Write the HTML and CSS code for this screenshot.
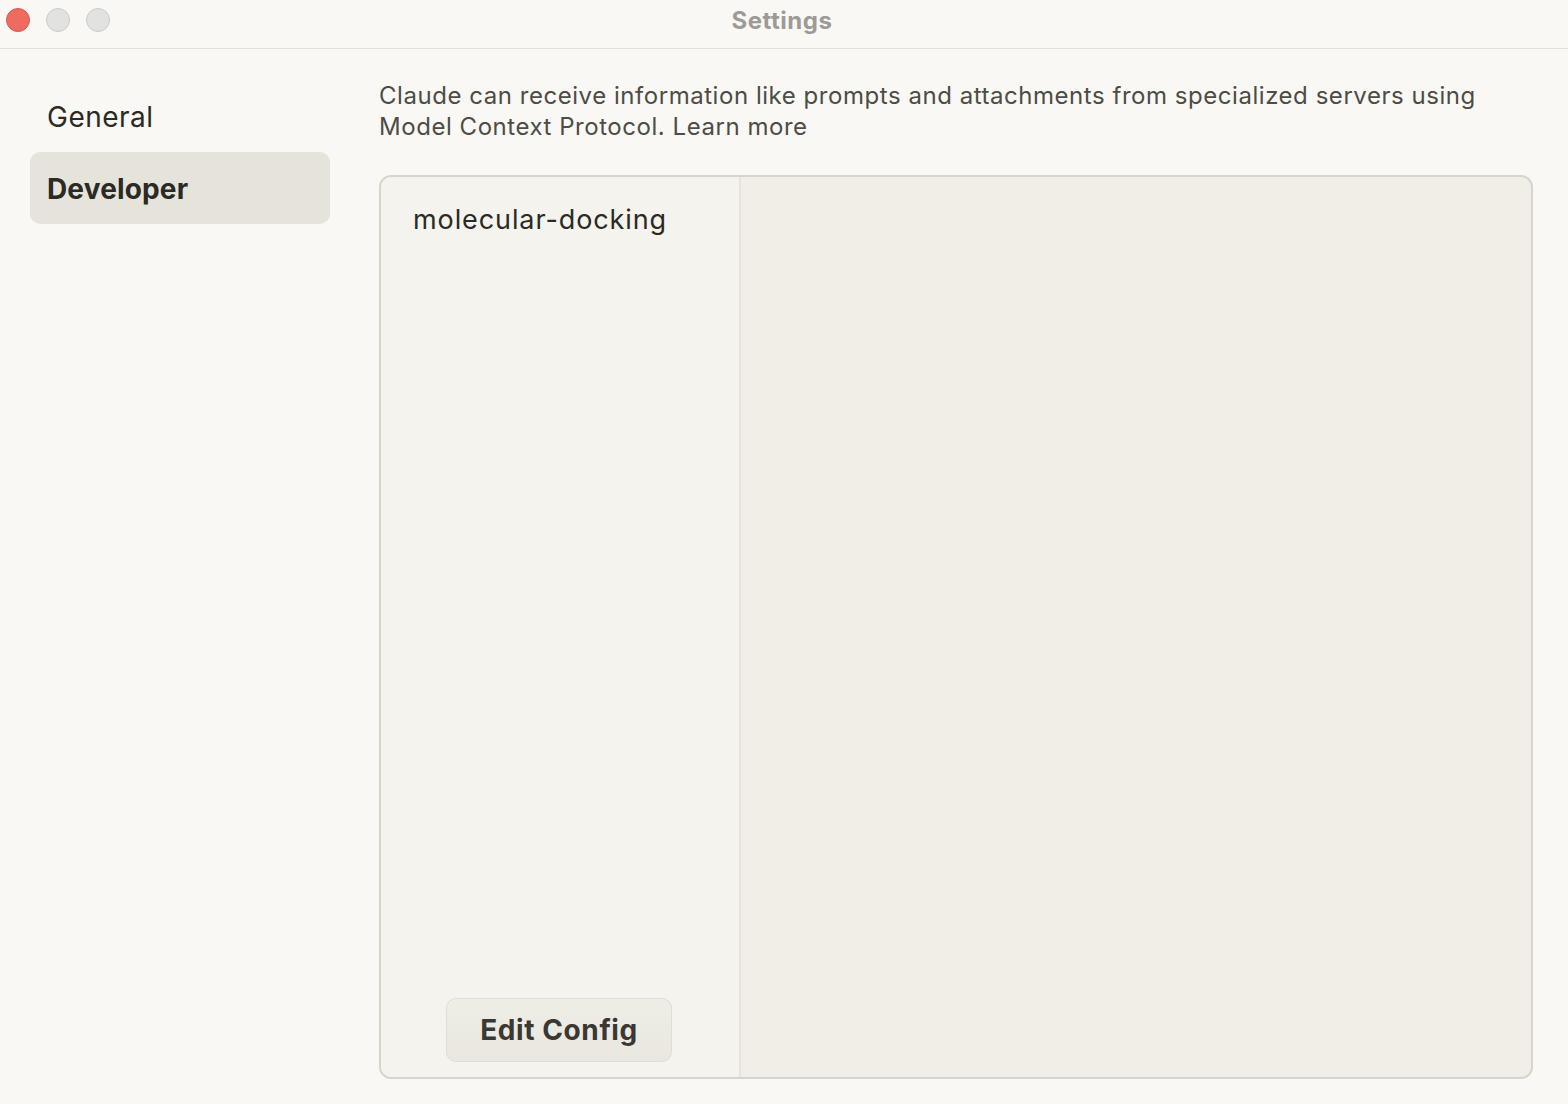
FILE: index.html
```html
<!DOCTYPE html>
<html lang="en">
<head>
<meta charset="utf-8">
<title>Settings</title>
<link rel="stylesheet" href="styles.css">
</head>
<body>
<div class="window">
  <header class="titlebar">
    <div class="lights">
      <span class="light red"></span>
      <span class="light gray"></span>
      <span class="light gray"></span>
    </div>
    <div class="title">Settings</div>
    <div class="spacer"></div>
  </header>
  <div class="layout">
    <nav class="sidebar">
      <div class="nav-item">General</div>
      <div class="nav-item active">Developer</div>
    </nav>
    <main class="main">
      <p class="desc">Claude can receive information like prompts and attachments from specialized servers using Model Context Protocol. Learn more</p>
      <section class="card">
        <div class="servers">
          <div class="server">molecular-docking</div>
          <div class="actions">
            <button class="btn">Edit Config</button>
          </div>
        </div>
        <div class="detail"></div>
      </section>
    </main>
  </div>
</div>
</body>
</html>
```

FILE: styles.css
```css
* { box-sizing: border-box; }
html, body { margin: 0; padding: 0; height: 100%; }
body {
  background: #f9f8f4;
  font-family: "Inter", "Noto Sans", sans-serif;
  color: #2b2a25;
}
.window { display: flex; flex-direction: column; height: 100vh; }
.titlebar {
  height: 49px;
  flex: none;
  display: grid;
  grid-template-columns: 1fr auto 1fr;
  align-items: start;
  border-bottom: 1.5px solid #e2e0da;
}
.lights { display: flex; gap: 16px; padding: 8px 0 0 6px; }
.light { width: 24px; height: 24px; border-radius: 50%; display: block; }
.light.red { background: #ee6b60; border: 1px solid #d9574d; }
.light.gray { background: #e2e2e0; border: 1px solid #cbcbc8; }
.title {
  font-size: 24px;
  font-weight: 700;
  color: #9c9b98;
  line-height: 26px;
  padding-top: 8px;
  margin-left: -4px;
  letter-spacing: 0.5px;
}
.layout { flex: 1; display: flex; min-height: 0; }
.sidebar {
  width: 330px;
  flex: none;
  padding: 31px 0 0 30px;
  display: flex;
  flex-direction: column;
}
.nav-item {
  height: 72px;
  display: flex;
  align-items: center;
  padding: 2px 0 0 17px;
  font-size: 28px;
  color: #2b2a25;
  border-radius: 10px;
  letter-spacing: 0.5px;
}
.nav-item.active {
  background: #e6e4da;
  font-weight: 700;
  letter-spacing: 0.15px;
}
.main {
  flex: 1;
  padding: 0 35px 25px 49px;
  display: flex;
  flex-direction: column;
  min-width: 0;
}
.desc {
  margin: 31px 0 33px 0;
  font-size: 24px;
  line-height: 31px;
  color: #4d4c46;
  letter-spacing: 0.54px;
}
.card {
  flex: 1;
  display: flex;
  border: 2px solid #d6d4cc;
  border-radius: 12px;
  overflow: hidden;
  background: #f0eee7;
}
.servers {
  width: 360px;
  flex: none;
  background: #f4f3ee;
  border-right: 2px solid #e5e3dc;
  display: flex;
  flex-direction: column;
  justify-content: space-between;
  padding: 25px 0 15px 32px;
}
.server {
  font-size: 27px;
  line-height: 36px;
  color: #2b2a25;
  letter-spacing: 0.9px;
}
.actions { display: flex; justify-content: center; padding-right: 34px; }
.btn {
  width: 226px;
  height: 64px;
  border-radius: 10px;
  border: 1px solid #e1ded1;
  background: linear-gradient(#eeede6, #e9e7df);
  font-family: inherit;
  font-size: 28px;
  font-weight: 700;
  color: #3a3833;
  letter-spacing: 0.6px;
  cursor: pointer;
}
.detail { flex: 1; }
```
